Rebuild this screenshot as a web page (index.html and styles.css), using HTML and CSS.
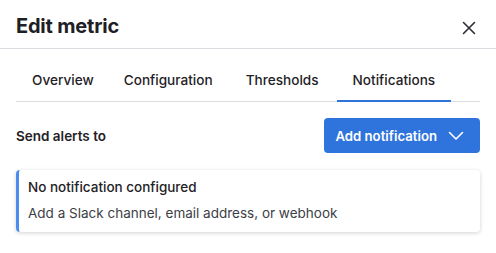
FILE: index.html
```html
<!DOCTYPE html>
<html>
<head>
<meta charset="utf-8">
<link rel="stylesheet" href="styles.css">
</head>
<body>
<div class="modal">
  <header class="modal-header">
    <h1 class="title">Edit metric</h1>
    <button class="close" aria-label="Close">
      <svg width="14" height="14" viewBox="0 0 14 14"><path d="M1.5 1.5 L12.5 12.5 M12.5 1.5 L1.5 12.5" stroke="#2a2d31" stroke-width="1.6" stroke-linecap="round" fill="none"/></svg>
    </button>
  </header>
  <nav class="tabs">
    <div class="tab">Overview</div>
    <div class="tab">Configuration</div>
    <div class="tab">Thresholds</div>
    <div class="tab active">Notifications</div>
  </nav>
  <section class="section">
    <div class="row">
      <span class="label">Send alerts to</span>
      <button class="primary">Add notification
        <svg class="chev" width="16" height="10" viewBox="0 0 16 10"><path d="M1.5 1.5 L8 8 L14.5 1.5" stroke="#fff" stroke-width="1.6" fill="none" stroke-linecap="round" stroke-linejoin="round"/></svg>
      </button>
    </div>
    <div class="card">
      <div class="card-title">No notification configured</div>
      <div class="card-text">Add a Slack channel, email address, or webhook</div>
    </div>
  </section>
</div>
</body>
</html>
```

FILE: styles.css
```css
* { box-sizing: border-box; }
html, body { margin: 0; padding: 0; background: #fff; }
body { font-family: Inter, "Noto Sans", sans-serif; color: #1f2226; }
.modal { width: 496px; height: 253px; background: #fff; }
.modal-header {
  height: 49px;
  display: flex;
  align-items: center;
  justify-content: space-between;
  padding: 0 16px 0 16px;
  border-bottom: 1px solid #d9dce1;
}
.title { margin: 0; font-size: 20px; font-weight: 700; letter-spacing: -0.2px; color: #1d2024; padding-top: 3px; }
.close { border: 0; background: none; padding: 0; width: 14px; height: 14px; margin-right: 4px; margin-top: 7px; display: flex; }
.tabs {
  display: flex;
  margin: 0 16px;
  border-bottom: 1px solid #d9dce1;
  height: 53px;
}
.tab {
  padding: 23px 16px 0;
  font-size: 13.6px;
  font-weight: 500;
  color: #1f2226;
  border-bottom: 2px solid transparent;
  margin-bottom: -1px;
}
.tab:nth-child(1) { padding-right: 15px; }
.tab:nth-child(2) { padding-left: 15px; padding-right: 17px; }
.tab:nth-child(3) { padding-right: 18px; }
.tab.active { border-bottom-color: #2f74dc; }
.section { padding: 0 16px; }
.row {
  display: flex;
  justify-content: space-between;
  align-items: center;
  margin-top: 16px;
}
.label { font-size: 13.5px; font-weight: 600; color: #1f2226; }
.primary {
  display: flex;
  align-items: center;
  gap: 11px;
  height: 35px;
  padding: 0 16px 0 11px;
  background: #2f74dc;
  color: #fff;
  border: 0;
  border-radius: 4px;
  font-family: inherit;
  font-size: 13.2px;
  font-weight: 600;
}
.chev { display: block; margin-top: 1px; }
.card {
  margin-top: 17px;
  border-left: 3px solid #4c8cef;
  border-radius: 4px;
  box-shadow: 0 1px 4px rgba(0,0,0,0.18);
  padding: 8px 12px 10px 9px;
  height: 62px;
}
.card-title { font-size: 13.5px; font-weight: 500; color: #1f2226; line-height: 18px; }
.card-text { font-size: 13.5px; color: #3c4046; line-height: 18px; margin-top: 8px; }
```
